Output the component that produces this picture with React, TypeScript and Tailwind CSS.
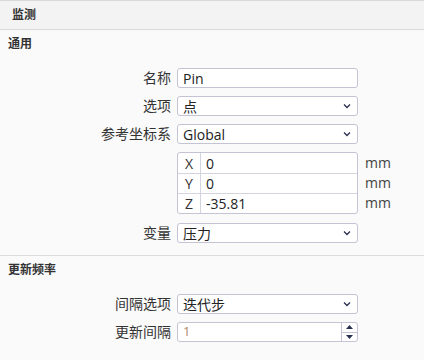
import React from "react";

const font = { fontFamily: '"Open Sans", "Noto Sans CJK SC", sans-serif' };

function Chevron() {
  return (
    <svg width="8" height="6" viewBox="0 0 8 6" className="shrink-0">
      <path d="M1 1.5 L4 4.5 L7 1.5" fill="none" stroke="#2a3050" strokeWidth="1.3" />
    </svg>
  );
}

function Row({ label, children, className = "" }: { label: string; children: React.ReactNode; className?: string }) {
  return (
    <div className={"flex items-center h-[20px] " + className}>
      <div className="w-[171px] text-right text-[14px] text-[#333] leading-none pr-0">{label}</div>
      <div className="ml-[6px] w-[181px] h-full">{children}</div>
    </div>
  );
}

function TextBox({ value }: { value: string }) {
  return (
    <div className="h-full w-full border border-[#c4c4d4] rounded-[3px] bg-white flex items-center pl-[5px] text-[14px] text-[#222]">
      {value}
    </div>
  );
}

function SelectBox({ value }: { value: string }) {
  return (
    <div className="h-full w-full border border-[#c4c4d4] rounded-[3px] bg-white flex items-center pl-[5px] pr-[6px] text-[14px] text-[#222]">
      <span className="flex-1">{value}</span>
      <Chevron />
    </div>
  );
}

export default function App() {
  return (
    <div className="w-[424px] h-[360px] bg-[#fafafa] text-[#333] overflow-hidden" style={font}>
      <div className="border-t border-[#d9d9d9] border-b h-[30px] bg-[#f3f3f3] flex items-center pl-[12px] text-[12px] font-bold text-[#333]">
        监测
      </div>
      <div className="h-[28px] flex items-center pl-[8px] text-[12px] font-bold text-[#333]">通用</div>
      <div className="flex flex-col">
        <Row label="名称" className="mt-[10px]">
          <TextBox value="Pin" />
        </Row>
        <Row label="选项" className="mt-[8px]">
          <SelectBox value="点" />
        </Row>
        <Row label="参考坐标系" className="mt-[8px]">
          <SelectBox value="Global" />
        </Row>
        <div className="flex mt-[8px]">
          <div className="w-[177px]" />
          <div className="w-[181px] border border-[#c4c4d4] rounded-[3px] bg-white flex flex-col">
            {[
              ["X", "0"],
              ["Y", "0"],
              ["Z", "-35.81"],
            ].map(([k, v], i) => (
              <div key={k} className={"flex h-[20px] " + (i > 0 ? "border-t border-[#d4d4de]" : "")}>
                <div className="w-[23px] border-r border-[#d4d4de] flex items-center justify-center text-[14px] text-[#333]">{k}</div>
                <div className="flex-1 flex items-center pl-[5px] text-[14px] text-[#222]">{v}</div>
              </div>
            ))}
          </div>
          <div className="flex flex-col ml-[7px] text-[14px] text-[#444]">
            <div className="h-[20px] flex items-center">mm</div>
            <div className="h-[20px] flex items-center">mm</div>
            <div className="h-[20px] flex items-center">mm</div>
          </div>
        </div>
        <Row label="变量" className="mt-[9px]">
          <SelectBox value="压力" />
        </Row>
      </div>
      <div className="mt-[12px] border-t border-[#dcdcdc]" />
      <div className="h-[28px] flex items-center pl-[8px] text-[12px] font-bold text-[#333]">更新频率</div>
      <Row label="间隔选项" className="mt-[10px]">
        <SelectBox value="迭代步" />
      </Row>
      <Row label="更新间隔" className="mt-[8px]">
        <div className="h-full w-full border border-[#c4c4d4] rounded-[3px] bg-white flex">
          <div className="flex-1 flex items-center pl-[5px] text-[13px] text-[#b08a6a]">1</div>
          <div className="w-[16px] border-l border-[#c4c4d4] flex flex-col">
            <div className="flex-1 flex items-center justify-center border-b border-[#c4c4d4]">
              <svg width="7" height="4" viewBox="0 0 7 4"><path d="M0 4 L3.5 0 L7 4 Z" fill="#2a3050" /></svg>
            </div>
            <div className="flex-1 flex items-center justify-center">
              <svg width="7" height="4" viewBox="0 0 7 4"><path d="M0 0 L3.5 4 L7 0 Z" fill="#2a3050" /></svg>
            </div>
          </div>
        </div>
      </Row>
    </div>
  );
}
